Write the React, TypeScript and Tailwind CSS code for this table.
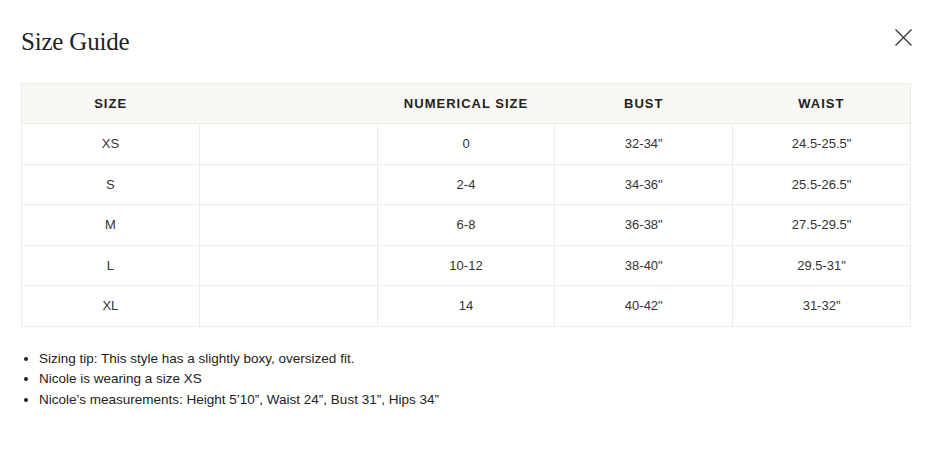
export default function App() {
  const rows = [
    ["XS", "0", '32-34"', '24.5-25.5"'],
    ["S", "2-4", '34-36"', '25.5-26.5"'],
    ["M", "6-8", '36-38"', '27.5-29.5"'],
    ["L", "10-12", '38-40"', '29.5-31"'],
    ["XL", "14", '40-42"', '31-32"'],
  ];

  return (
    <div className="min-h-[450px] w-[927px] bg-white px-[21px] pt-[27px] font-['Liberation_Sans',Arial,sans-serif] text-[#333]">
      {/* Header */}
      <div className="flex items-start justify-between">
        <h2 className="font-['Liberation_Serif','DejaVu_Serif',serif] text-[25px] leading-[30px] tracking-[-0.2px] text-[#222]">
          Size Guide
        </h2>
        <button className="-mr-[6px] mt-[2px] h-[17px] w-[17px] text-[#333]">
          <svg viewBox="0 0 17 17" width="17" height="17" fill="none" stroke="currentColor" strokeWidth="1.2">
            <path d="M0.5 0.5L16.5 16.5M16.5 0.5L0.5 16.5" />
          </svg>
        </button>
      </div>

      {/* Table */}
      <table className="mt-[26px] w-[890px] table-fixed border-collapse text-[13px]">
        <thead>
          <tr className="h-[40px] bg-[#f9f8f5]">
            <th className="border-t border-l border-[#efece3] text-[13px] font-semibold uppercase tracking-[1px] text-[#222]">Size</th>
            <th className="border-t border-[#efece3]"></th>
            <th className="border-t border-[#efece3] text-[13px] font-semibold uppercase tracking-[1px] text-[#222]">Numerical Size</th>
            <th className="border-t border-[#efece3] text-[13px] font-semibold uppercase tracking-[1px] text-[#222]">Bust</th>
            <th className="border-t border-r border-[#efece3] text-[13px] font-semibold uppercase tracking-[1px] text-[#222]">Waist</th>
          </tr>
        </thead>
        <tbody>
          {rows.map((r) => (
            <tr key={r[0]} className="h-[40.6px]">
              <td className="border border-[#efece3] text-center">{r[0]}</td>
              <td className="border border-[#efece3]"></td>
              <td className="border border-[#efece3] text-center">{r[1]}</td>
              <td className="border border-[#efece3] text-center">{r[2]}</td>
              <td className="border border-[#efece3] text-center">{r[3]}</td>
            </tr>
          ))}
        </tbody>
      </table>

      {/* Notes */}
      <ul className="mt-[22px] list-disc pl-[18px] text-[13.5px] leading-[20.5px] text-[#222]">
        <li>Sizing tip: This style has a slightly boxy, oversized fit.</li>
        <li>Nicole is wearing a size XS</li>
        <li>Nicole’s measurements: Height 5’10”, Waist 24”, Bust 31”, Hips 34”</li>
      </ul>
    </div>
  );
}
